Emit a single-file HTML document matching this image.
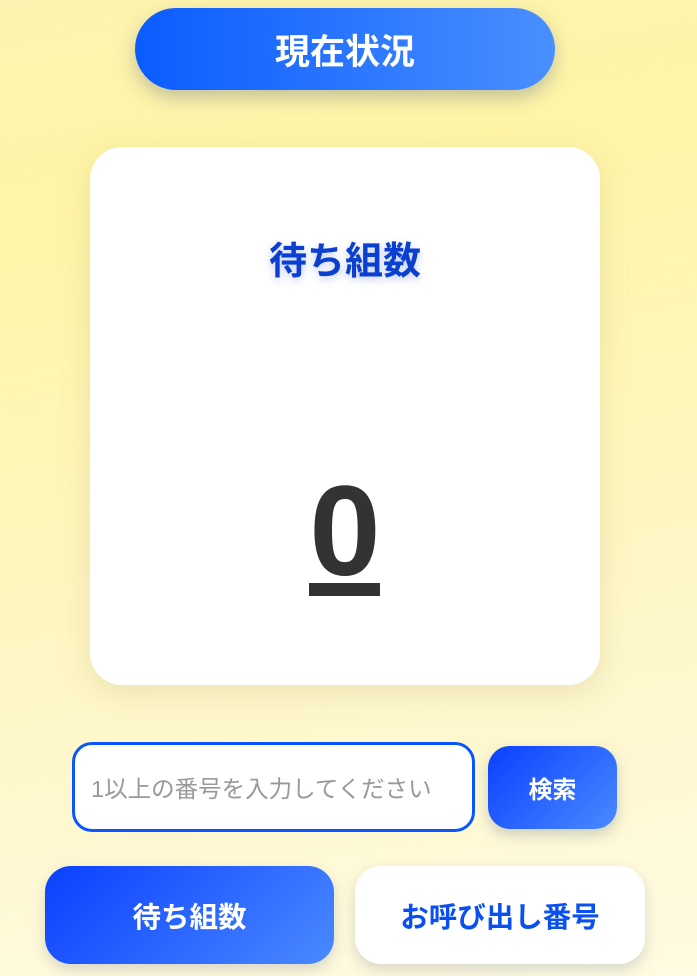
<!DOCTYPE html>
<html><head><meta charset="utf-8"><style>
*{margin:0;padding:0;box-sizing:border-box}
body{width:697px;height:976px;overflow:hidden;position:relative;background:linear-gradient(170deg,#fdf3b0 0%,#fff5a6 20%,#fef6c4 60%,#fffbe2 100%);font-family:"Liberation Sans","Noto Sans CJK JP",sans-serif;}
.hdr{position:absolute;left:135px;top:8px;width:420px;height:82px;border-radius:41px;background:linear-gradient(90deg,#0a5cff,#4a8fff);box-shadow:0 8px 18px rgba(60,80,120,.3);color:#fff;font-size:35px;font-weight:bold;display:flex;align-items:center;justify-content:center}
.card{position:absolute;left:90px;top:147px;width:510px;height:538px;background:#fff;border-radius:32px;box-shadow:0 8px 30px rgba(150,140,80,.18)}
.t{position:absolute;left:0;width:690px;top:230px;text-align:center;font-size:38px;font-weight:bold;color:#0a3fd0;text-shadow:0 3px 8px rgba(10,63,208,.25)}
.num{position:absolute;left:0;width:690px;top:462px;text-align:center;font-size:128px;font-weight:bold;color:#333;line-height:140px}
.ul{position:absolute;left:309px;top:583px;width:71px;height:13px;background:#333}
.inp{position:absolute;left:72px;top:742px;width:403px;height:90px;border:3px solid #0a55ff;border-radius:20px;background:#fff;color:#999;font-size:23.5px;padding-left:16px;display:flex;align-items:center}
.sb{position:absolute;left:488px;top:746px;width:129px;height:83px;border-radius:22px;background:linear-gradient(135deg,#0a40ff,#4a8aff);color:#fff;font-size:24px;font-weight:bold;display:flex;align-items:center;justify-content:center;box-shadow:0 6px 14px rgba(60,80,120,.25)}
.b{position:absolute;top:866px;height:98px;width:289px;border-radius:26px;font-size:28.5px;font-weight:bold;display:flex;align-items:center;justify-content:center;box-shadow:0 6px 14px rgba(60,80,120,.2)}
.b1{left:45px;background:linear-gradient(135deg,#0a40ff,#4a8aff);color:#fff}
.b2{left:355px;width:290px;background:#fff;color:#0a50f0}
</style></head><body>
<div class="hdr">現在状況</div>
<div class="card"></div>
<div class="t">待ち組数</div>
<div class="num">0</div>
<div class="ul"></div>
<div class="inp">1以上の番号を入力してください</div>
<div class="sb">検索</div>
<div class="b b1">待ち組数</div>
<div class="b b2">お呼び出し番号</div>
</body></html>
